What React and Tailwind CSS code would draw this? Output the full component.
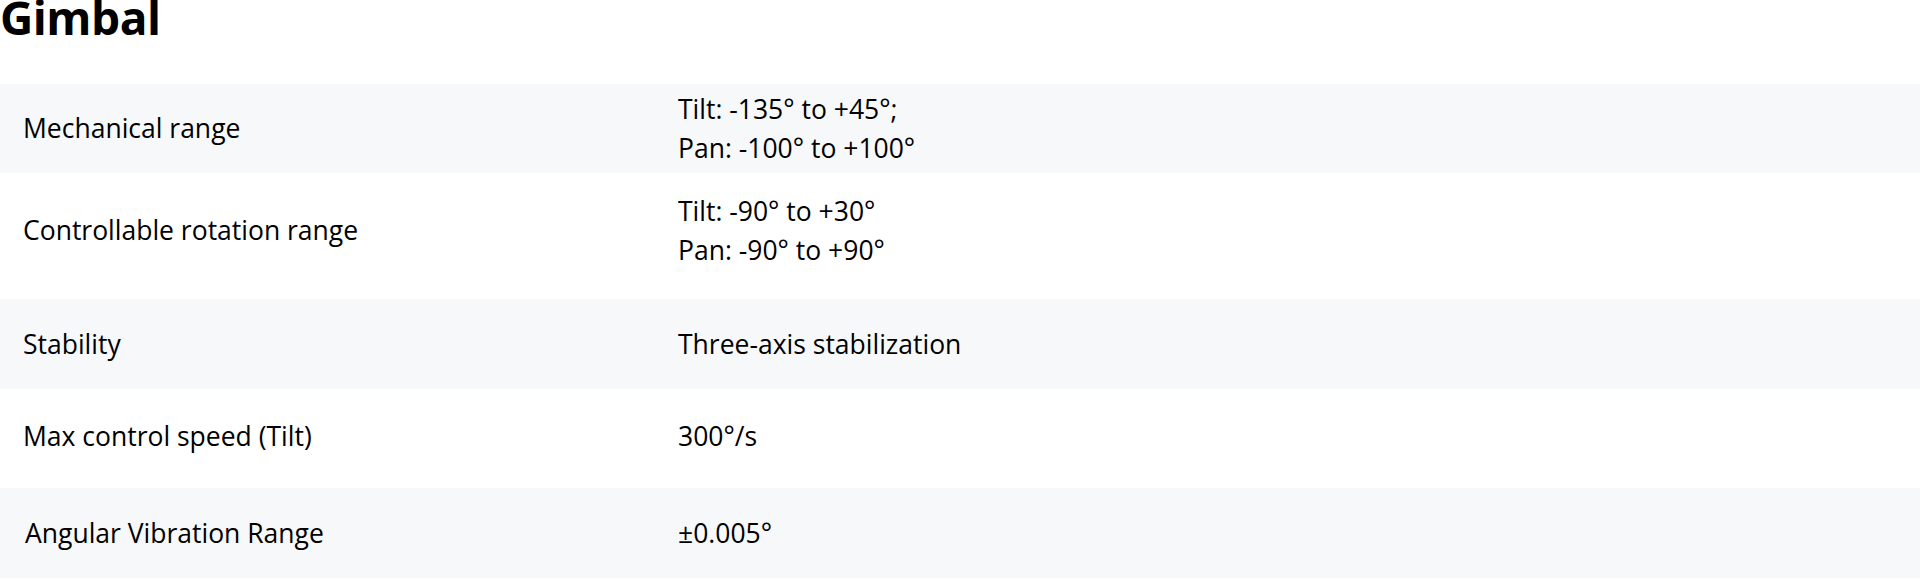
const specs = [
  { label: "Mechanical range", value: ["Tilt: -135° to +45°;", "Pan: -100° to +100°"], row: "h-[89px] bg-[#f7f8fa]", pad: "pl-[23px]" },
  { label: "Controllable rotation range", value: ["Tilt: -90° to +30°", "Pan: -90° to +90°"], row: "h-[126px] pb-[11px]", pad: "pl-[23px]" },
  { label: "Stability", value: ["Three-axis stabilization"], row: "h-[90px] bg-[#f7f8fa]", pad: "pl-[23px]" },
  { label: "Max control speed (Tilt)", value: ["300°/s"], row: "h-[99px] pb-[4px]", pad: "pl-[23px]" },
  { label: "Angular Vibration Range", value: ["±0.005°"], row: "h-[90px] bg-[#f7f8fa]", pad: "pl-[25px]" },
];

export default function App() {
  return (
    <div className="w-[1920px] h-[579px] overflow-hidden bg-white text-black font-['Open_Sans',sans-serif]">
      {/* Section title sits tight against the top edge */}
      <h2 className="mb-[50px] text-[46px] font-bold leading-[34px] tracking-[-0.5px]">Gimbal</h2>

      {/* Spec table: striped rows, label column then value column */}
      <div className="flex flex-col">
        {specs.map((s) => (
          <div key={s.label} className={`flex items-center ${s.row}`}>
            <div className={`w-[678px] shrink-0 text-[26.5px] leading-[39px] ${s.pad}`}>{s.label}</div>
            <div className="text-[26.5px] leading-[39px]">
              {s.value.map((line) => (
                <div key={line}>{line}</div>
              ))}
            </div>
          </div>
        ))}
      </div>
    </div>
  );
}
